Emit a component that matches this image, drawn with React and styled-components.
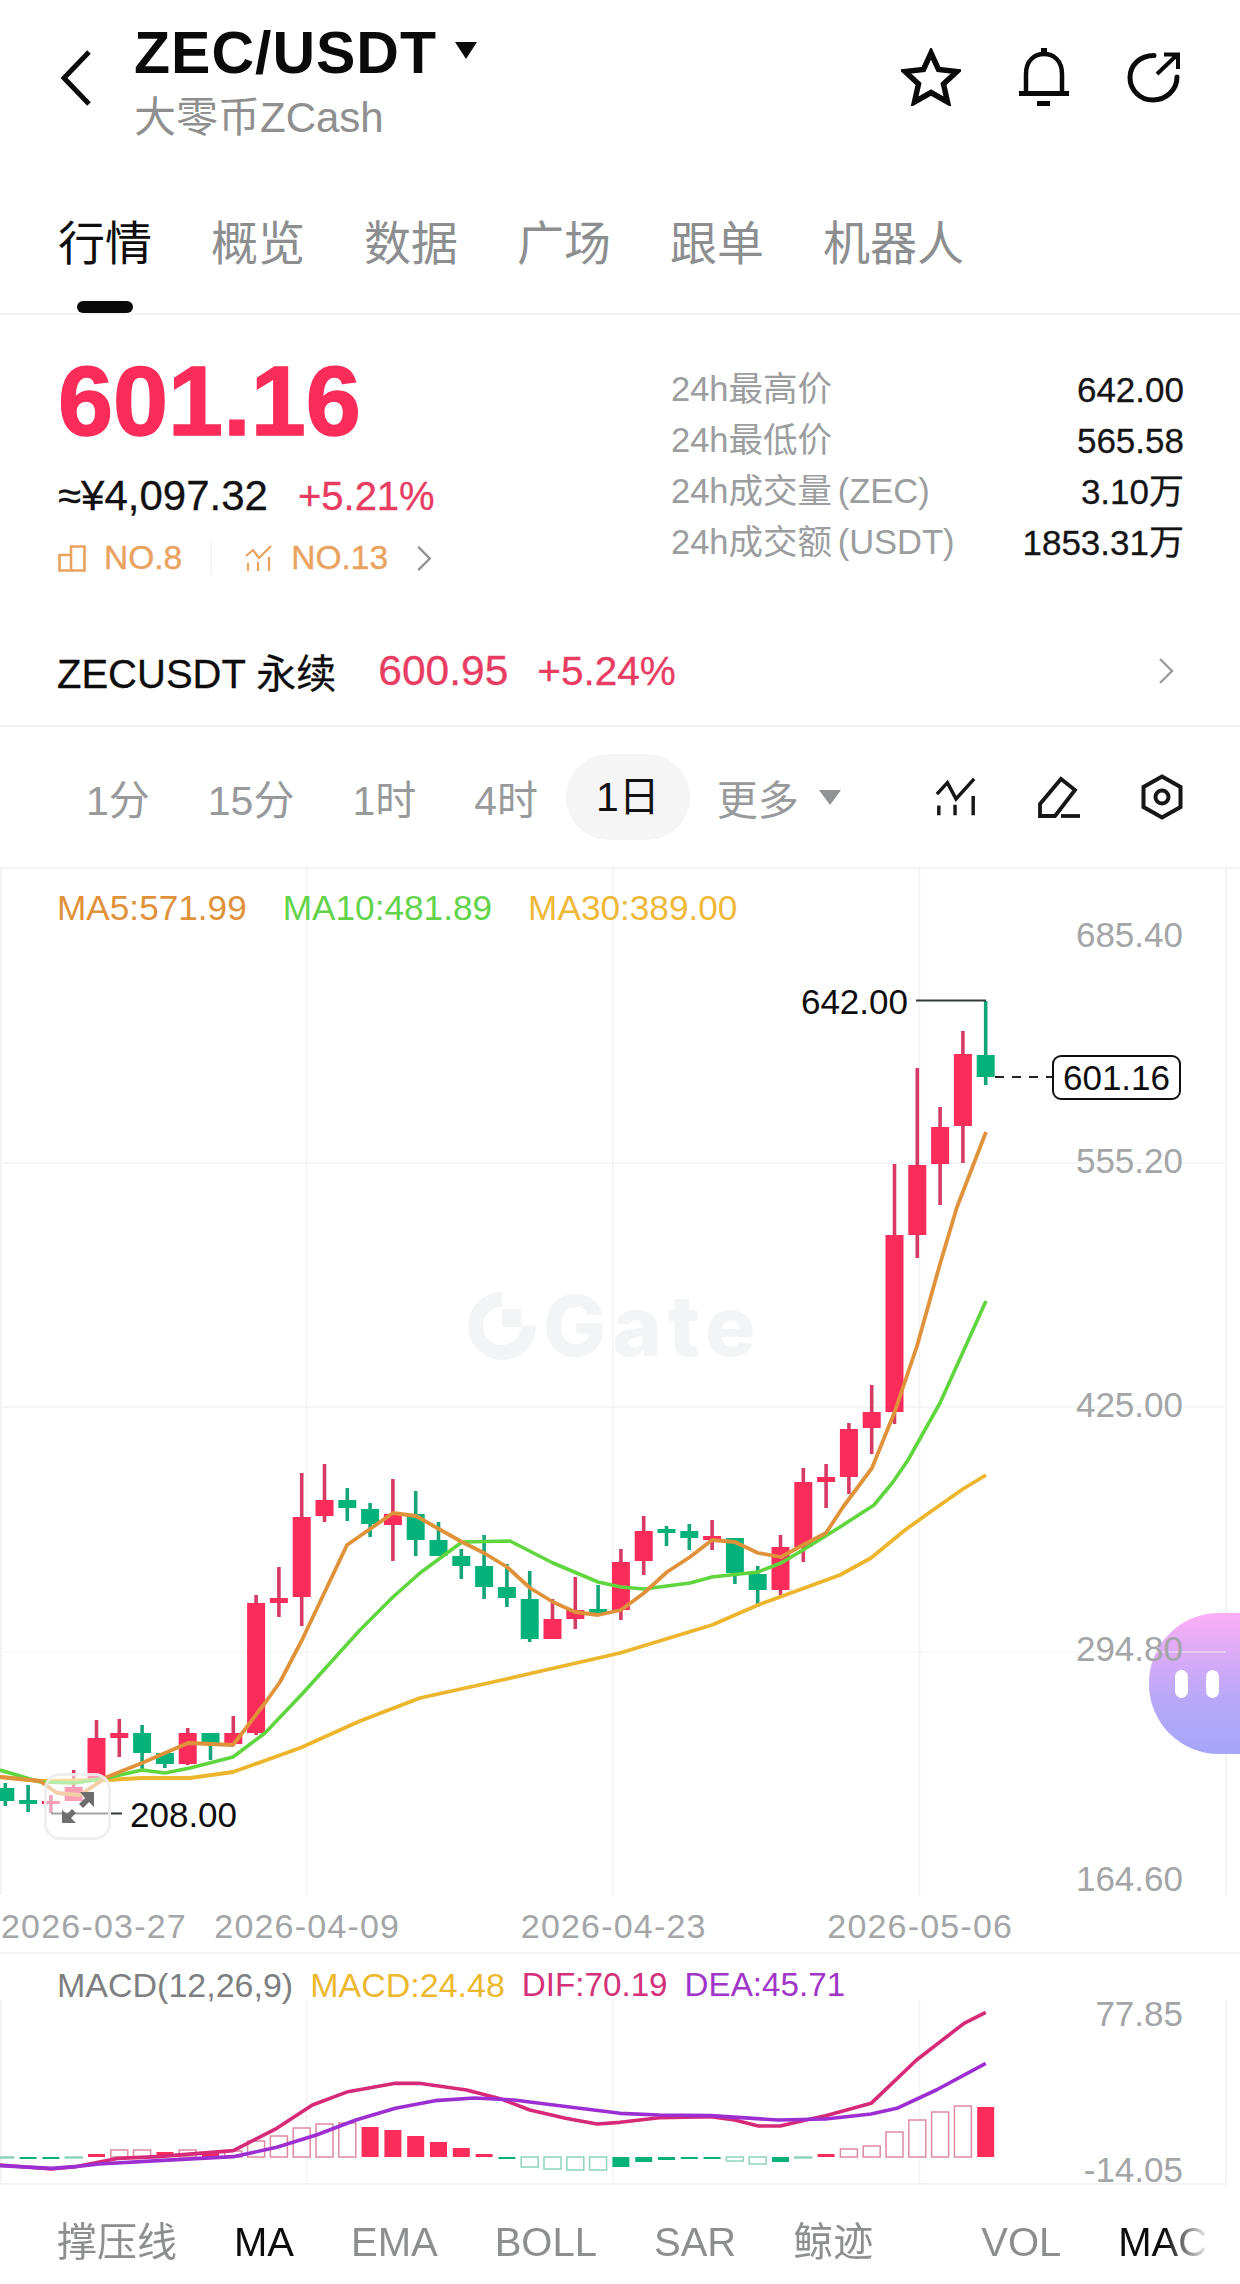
import React from 'react';
import styled, { createGlobalStyle } from 'styled-components';

const GlobalStyle = createGlobalStyle`
    html, body {
        margin: 0;
        padding: 0;
        background: #fff;
    }
    body {
        font-family: "Liberation Sans", "Noto Sans CJK SC", sans-serif;
    }
`;

const RED = '#fb2c59';
const RED_WICK = '#d63a65';
const GREEN = '#05b37a';
const GREEN_WICK = '#14a47a';
const GRID = '#f2f3f4';
const AXIS = '#a3a5a7';

const Page = styled.div`
    position: relative;
    width: 1240px;
    height: 2284px;
    overflow: hidden;
    background: #fff;
    color: #111;
`;

const Header = styled.header`
    display: flex;
    align-items: flex-start;
    height: 140px;
    box-sizing: border-box;
    padding: 22px 59px 0 60px;
`;

const BackIcon = styled.svg`
    width: 32px;
    height: 56px;
    margin-top: 28px;
`;

const TitleBlock = styled.div`
    margin-left: 42px;
    display: flex;
    flex-direction: column;
`;

const Title = styled.h1`
    display: flex;
    align-items: flex-start;
    margin: 0;
    font-size: 59px;
    line-height: 62px;
    font-weight: 700;
    color: #0a0a0a;
    letter-spacing: 1px;
`;

const Caret = styled.span`
    margin: 20px 0 0 18px;
    width: 0;
    height: 0;
    border-left: 11px solid transparent;
    border-right: 11px solid transparent;
    border-top: 17px solid #0a0a0a;
`;

const Subtitle = styled.div`
    margin-top: 9px;
    font-size: 42px;
    line-height: 50px;
    color: #8f8f8f;
`;

const HeaderIcons = styled.div`
    display: flex;
    align-items: center;
    gap: 58px;
    margin-left: auto;
    margin-top: 26px;
`;

const Tabs = styled.nav`
    display: flex;
    gap: 59px;
    height: 175px;
    box-sizing: border-box;
    padding: 74px 0 0 58px;
    border-bottom: 2px solid #f3f3f3;
`;

const Tab = styled.div`
    position: relative;
    height: 60px;
    font-size: 47px;
    line-height: 60px;
    color: ${(p) => (p.$active ? '#0d0d0d' : '#8c8e90')};

    ${(p) => p.$active && `
        &::after {
            content: '';
            position: absolute;
            left: 19px;
            top: 87px;
            width: 56px;
            height: 12px;
            border-radius: 6px;
            background: #0a0a0a;
        }
    `}
`;

const Stats = styled.section`
    display: flex;
    justify-content: space-between;
    height: 305px;
    box-sizing: border-box;
    padding: 36px 56px 0 58px;
`;

const PriceColumn = styled.div`
    display: flex;
    flex-direction: column;
`;

const BigPrice = styled.div`
    font-size: 99px;
    line-height: 100px;
    font-weight: 700;
    color: ${RED};
    -webkit-text-stroke: 1.5px ${RED};
`;

const FiatRow = styled.div`
    display: flex;
    gap: 30px;
    margin-top: 20px;
    line-height: 50px;
    font-size: 42px;
    -webkit-text-stroke: 0.3px currentColor;
`;

const Change = styled.span`
    font-size: 40px;
    color: #e83c63;
`;

const RankRow = styled.div`
    display: flex;
    align-items: center;
    margin-top: 17px;
    height: 40px;
    font-size: 33.5px;
    color: #e9a35f;
    -webkit-text-stroke: 0.4px currentColor;
`;

const RankItem = styled.div`
    display: flex;
    align-items: center;
    gap: 18px;
`;

const RankDivider = styled.span`
    width: 2px;
    height: 34px;
    margin: 0 33px 0 28px;
    background: #f5f5f5;
`;

const RankChevron = styled.svg`
    width: 16px;
    height: 27px;
    margin-left: 28px;
`;

const StatTable = styled.div`
    display: flex;
    flex-direction: column;
    width: 513px;
    padding-top: 13px;
`;

const StatRow = styled.div`
    display: flex;
    justify-content: space-between;
    height: 51px;
    line-height: 51px;
    font-size: 34.5px;
`;

const StatLabel = styled.span`
    color: #9b9d9f;
    word-spacing: -4px;
`;

const StatValue = styled.span`
    font-size: 35px;
    color: #141414;
    -webkit-text-stroke: 0.3px currentColor;
`;

const PerpRow = styled.section`
    display: flex;
    align-items: center;
    height: 107px;
    box-sizing: border-box;
    padding: 0 65px 3px 57px;
    border-bottom: 2px solid #f3f3f3;
    font-size: 40px;
`;

const PerpName = styled.span`
    color: #0d0d0d;
    -webkit-text-stroke: 0.3px currentColor;
`;

const PerpPrice = styled.span`
    margin-left: 42px;
    font-size: 42.5px;
    color: #e83c63;
    -webkit-text-stroke: 0.3px currentColor;
`;

const PerpChange = styled.span`
    margin-left: 29px;
    font-size: 40.5px;
    color: #e83c63;
    -webkit-text-stroke: 0.3px currentColor;
`;

const PerpChevron = styled.svg`
    width: 18px;
    height: 28px;
    margin-left: auto;
`;

const IntervalBar = styled.section`
    display: flex;
    align-items: center;
    height: 142px;
    box-sizing: border-box;
    padding: 0 57px 0 86px;
    border-bottom: 2px solid #f3f3f3;
    font-size: 41px;
`;

const Interval = styled.div`
    color: ${(p) => (p.$active ? '#111' : '#97999b')};
    margin-right: 58px;
    ${(p) => p.$active && `
        height: 86px;
        line-height: 86px;
        padding: 0 30px;
        margin: 0 27px 0 -30px;
        border-radius: 43px;
        background: #f5f5f5;
    `}
`;

const MoreLabel = styled.div`
    color: #97999b;
`;

const MoreCaret = styled.span`
    margin-left: 20px;
    width: 0;
    height: 0;
    border-left: 11px solid transparent;
    border-right: 11px solid transparent;
    border-top: 15px solid #909294;
`;

const ToolIcons = styled.div`
    display: flex;
    align-items: center;
    gap: 60px;
    margin-left: auto;
`;

const ChartPanel = styled.section`
    position: relative;
    z-index: 1;
    height: 1026px;
`;

const ChartSvg = styled.svg`
    display: block;
    width: 1240px;
    overflow: visible;

    text {
        font-family: "Liberation Sans", sans-serif;
        font-size: 35px;
    }

    .watermark {
        font-family: Inter, "Liberation Sans", sans-serif;
        font-size: 84px;
        font-weight: 800;
        letter-spacing: 6px;
    }
`;

const Legend = styled.div`
    display: flex;
    gap: 36px;
    font-size: 35.2px;
    line-height: 30px;
`;

const ChartLegend = styled(Legend)`
    position: absolute;
    left: 57px;
    top: 24px;
`;

const LegendItem = styled.span`
    color: ${(p) => p.$color};
    font-size: ${(p) => p.$size || 'inherit'};
`;

const ExpandButton = styled.div`
    position: absolute;
    left: 44px;
    top: 904px;
    width: 67px;
    height: 67px;
    box-sizing: border-box;
    display: flex;
    align-items: center;
    justify-content: center;
    border: 3px solid rgba(236, 236, 236, 0.85);
    border-radius: 16px;
    background: rgba(255, 255, 255, 0.55);
`;

const DateRow = styled.div`
    display: grid;
    grid-template-columns: 153px repeat(3, 306.5px);
    align-items: center;
    height: 59px;
    box-sizing: border-box;
    padding: 6px 0 0 1px;
    border-bottom: 2px solid #f3f3f3;
    font-size: 34px;
    letter-spacing: 1.2px;
    color: ${AXIS};
`;

const DateLabel = styled.span`
    white-space: nowrap;
    justify-self: ${(p) => (p.$first ? 'start' : 'center')};
`;

const MacdPanel = styled.section`
    position: relative;
    z-index: 1;
    height: 231px;
`;

const MacdLegend = styled(Legend)`
    gap: 17px;
    height: 46px;
    box-sizing: border-box;
    padding: 16px 0 0 57px;
    font-size: 34px;
`;

const BottomBar = styled.nav`
    display: flex;
    gap: 57px;
    width: 1210px;
    height: 99px;
    box-sizing: border-box;
    padding: 27px 0 0 57px;
    overflow: hidden;
    font-size: 40px;
    line-height: 60px;
    white-space: nowrap;
    mask-image: linear-gradient(to right, #000 1165px, transparent 1210px);
`;

const BottomItem = styled.span`
    color: ${(p) => (p.$active ? '#0d0d0d' : '#8c8e90')};
`;

const BottomDivider = styled.span`
    width: 2px;
    height: 44px;
    margin: 8px 0 0 -6px;
    background: #f3f3f3;
`;

const Assistant = styled.div`
    position: absolute;
    z-index: 0;
    right: 0;
    top: 1613px;
    width: 91px;
    height: 141px;
    display: flex;
    justify-content: flex-start;
    align-items: center;
    gap: 18px;
    box-sizing: border-box;
    padding: 0 0 0 26px;
    border-radius: 70px 0 0 70px;
    background: linear-gradient(180deg, #fcaef6 0%, #b9a8f8 60%, #a6a6fb 100%);
`;

const AssistantEye = styled.span`
    width: 13px;
    height: 28px;
    border-radius: 7px;
    background: #fff;
`;

// k counts from the newest candle: [k, up, wickTop, bodyTop, bodyBottom, wickBottom]
const candles = [
    [0, false, 1001, 1055, 1077, 1085],
    [1, true, 1031, 1054, 1126, 1163],
    [2, true, 1107, 1127, 1164, 1205],
    [3, true, 1068, 1165, 1235, 1258],
    [4, true, 1164, 1235, 1412, 1424],
    [5, true, 1385, 1412, 1428, 1454],
    [6, true, 1423, 1429, 1477, 1494],
    [7, true, 1464, 1477, 1482, 1508],
    [8, true, 1468, 1482, 1547, 1562],
    [9, true, 1535, 1547, 1590, 1595],
    [10, false, 1566, 1574, 1590, 1607],
    [11, false, 1538, 1538, 1573, 1584],
    [12, true, 1520, 1536, 1540, 1550],
    [13, false, 1524, 1531, 1538, 1550],
    [14, false, 1526, 1529, 1533, 1546],
    [15, true, 1516, 1531, 1561, 1575],
    [16, true, 1549, 1562, 1610, 1620],
    [17, false, 1585, 1609, 1613, 1616],
    [18, true, 1577, 1610, 1619, 1629],
    [19, true, 1599, 1619, 1639, 1639],
    [20, false, 1571, 1599, 1639, 1642],
    [21, false, 1564, 1587, 1598, 1607],
    [22, false, 1535, 1566, 1587, 1599],
    [23, false, 1549, 1556, 1566, 1579],
    [24, false, 1522, 1540, 1556, 1556],
    [25, false, 1491, 1514, 1540, 1556],
    [26, true, 1479, 1514, 1525, 1561],
    [27, false, 1503, 1509, 1524, 1537],
    [28, false, 1488, 1500, 1508, 1521],
    [29, true, 1464, 1500, 1516, 1522],
    [30, true, 1473, 1517, 1597, 1626],
    [31, true, 1567, 1598, 1603, 1617],
    [32, true, 1595, 1603, 1733, 1735],
    [33, true, 1716, 1733, 1744, 1744],
    [34, false, 1733, 1733, 1744, 1760],
    [35, true, 1728, 1733, 1764, 1765],
    [36, false, 1753, 1753, 1764, 1768],
    [37, false, 1725, 1733, 1753, 1770],
    [38, true, 1719, 1733, 1738, 1757],
    [39, true, 1720, 1738, 1782, 1782],
    [40, true, 1770, 1787, 1801, 1801],
    [41, true, 1795, 1801, 1804, 1813],
    [42, false, 1785, 1800, 1804, 1812],
    [43, false, 1783, 1788, 1801, 1806],
];

const candleX = (k) => 985.7 - k * 22.8;

const ma5 = '0,1777 40,1781 57,1793 80,1795 107,1777 142,1763 188,1743 233,1745 265,1703 280,1682 302,1640 347,1545 393,1513 416,1516 439,1529 462,1542 484,1553 507,1567 530,1588 553,1602 575,1612 598,1615 621,1610 644,1593 667,1572 690,1557 712,1540 735,1542 758,1553 781,1557 803,1545 826,1533 843,1507 872,1468 895,1411 917,1346 940,1264 957,1207 986,1132';
const ma10 = '0,1770 40,1782 75,1783 107,1778 142,1770 165,1773 190,1768 233,1757 265,1733 303,1693 360,1630 393,1597 420,1573 462,1542 510,1541 553,1563 598,1582 621,1587 644,1589 690,1583 712,1577 758,1572 781,1563 803,1550 840,1527 874,1505 893,1482 908,1460 940,1403 963,1352 986,1301';
const ma30 = '0,1777 40,1781 107,1780 142,1778 190,1778 233,1772 300,1748 360,1721 420,1698 502,1680 620,1653 712,1625 758,1605 840,1575 871,1558 905,1530 933,1510 963,1489 986,1475';

// macd bars: [k, bar end y, filled]
const macdBars = [
    [0, 2107, true], [1, 2106, false], [2, 2112, false], [3, 2120, false], [4, 2132, false],
    [5, 2146, false], [6, 2149, false], [7, 2154, true], [8, 2158, false], [9, 2162, true],
    [10, 2164, false], [11, 2161, false], [12, 2158, true], [13, 2158, true], [14, 2160, true],
    [15, 2162, true], [16, 2167, true], [17, 2170, false], [18, 2170, false], [19, 2169, false],
    [20, 2167, false], [21, 2159, true], [22, 2154, true], [23, 2148, true], [24, 2142, true],
    [25, 2136, true], [26, 2130, true], [27, 2127, true], [28, 2123, false], [29, 2124, false],
    [30, 2128, false], [31, 2136, false], [32, 2141, false], [33, 2151, false], [34, 2152, true],
    [35, 2150, false], [36, 2152, true], [37, 2150, false], [38, 2150, false], [39, 2154, true],
    [40, 2158, false], [41, 2159, true], [42, 2158, true], [43, 2158, false],
];

const MACD_ZERO = 2157;

const toPoints = (pts, ox, sx) => pts.map(([x, y]) => `${ox + x / sx},${1940 + y / 3}`).join(' ');

const dif = [
    toPoints([[0, 675], [130, 687], [190, 680], [300, 655], [400, 650], [590, 632], [700, 565], [790, 495], [880, 455], [1000, 430], [1060, 430], [1180, 450], [1270, 478], [1340, 510], [1430, 535], [1510, 552], [1568, 547]], 0, 2.529),
    toPoints([[100, 533], [230, 530], [290, 540], [350, 558], [405, 558], [470, 540], [520, 527], [635, 490], [750, 360], [870, 250], [925, 217]], 620, 2.529),
].join(' ');

const dea = [
    toPoints([[0, 677], [130, 685], [190, 680], [250, 672], [400, 662], [590, 650], [700, 622], [800, 585], [900, 540], [1000, 505], [1100, 482], [1200, 474], [1300, 480], [1400, 495], [1568, 520]], 0, 2.529),
    toPoints([[100, 525], [230, 527], [400, 540], [520, 537], [635, 522], [700, 505], [800, 450], [925, 370]], 620, 2.529),
].join(' ');

const gridX = [306.5, 613, 919.5];

function StarIcon() {
    return (
        <svg width="60" height="58" viewBox="0 0 60 58">
            <polygon
                points="30,5 37.5,21.5 56,23.5 42.5,36 46.5,54 30,44.5 13.5,54 17.5,36 4,23.5 22.5,21.5"
                fill="none"
                stroke="#0a0a0a"
                strokeWidth="5.5"
                strokeLinejoin="miter"
            />
        </svg>
    );
}

function BellIcon() {
    return (
        <svg width="50" height="58" viewBox="0 0 50 58">
            <path d="M7 45V26C7 12 16 6 25 6s18 6 18 20v19" fill="none" stroke="#0a0a0a" strokeWidth="4.5" />
            <rect x="0" y="43" width="50" height="5" fill="#0a0a0a" />
            <rect x="22" y="0" width="6" height="7" fill="#0a0a0a" />
            <rect x="18" y="53" width="13" height="5" fill="#0a0a0a" />
        </svg>
    );
}

function ShareIcon() {
    return (
        <svg width="54" height="52" viewBox="0 0 54 52">
            <path d="M27 4.5C13 4.5 3 14 3 26.5S13 49 26 49s24-10 24-23" fill="none" stroke="#0a0a0a" strokeWidth="5" strokeLinecap="round" />
            <path d="M30 23L50 4M37 3.5h14V18" fill="none" stroke="#0a0a0a" strokeWidth="4" />
        </svg>
    );
}

function IndicatorIcon() {
    return (
        <svg width="42" height="40" viewBox="0 0 44 40">
            <path d="M2 17L13 5l9 17L41 1" fill="none" stroke="#161616" strokeWidth="3.6" />
            <path d="M4 29v10M21 28v11M40 19v20" stroke="#161616" strokeWidth="3.6" />
        </svg>
    );
}

function PenIcon() {
    return (
        <svg width="44" height="44" viewBox="0 0 44 44">
            <path d="M3 41V29L24 4l14 11-20 26z" fill="none" stroke="#161616" strokeWidth="3.8" />
            <path d="M24 41h19" stroke="#161616" strokeWidth="3.8" />
        </svg>
    );
}

function HexIcon() {
    return (
        <svg width="42" height="46" viewBox="0 0 42 46">
            <polygon points="21,2.5 39.5,13 39.5,33 21,43.5 2.5,33 2.5,13" fill="none" stroke="#161616" strokeWidth="4" />
            <circle cx="21" cy="23" r="6.5" fill="none" stroke="#161616" strokeWidth="4" />
        </svg>
    );
}

function RankBoxIcon() {
    return (
        <svg width="28" height="27" viewBox="0 0 28 27">
            <path d="M13 10H1.5v15.5H13zM13 1.5h13.5v24H13z" fill="none" stroke="#e9a35f" strokeWidth="2.6" />
        </svg>
    );
}

function RankChartIcon() {
    return (
        <svg width="28" height="27" viewBox="0 0 28 27">
            <path d="M1 11l7-6 6 8L26 1" fill="none" stroke="#e9a35f" strokeWidth="2.2" />
            <path d="M3 18v8M13 17v9M24 12v14" stroke="#e9a35f" strokeWidth="2.2" />
        </svg>
    );
}

function ChevronPath({ color }) {
    return <path d="M2 2l12 12L2 26" fill="none" stroke={color} strokeWidth="2.4" />;
}

function Candle({ k, up, wickTop, bodyTop, bodyBottom, wickBottom }) {
    const x = candleX(k);
    return (
        <g>
            <line x1={x} x2={x} y1={wickTop} y2={wickBottom} stroke={up ? RED_WICK : GREEN_WICK} strokeWidth="3.6" />
            <rect x={x - 9} y={bodyTop} width="18" height={bodyBottom - bodyTop} fill={up ? RED : GREEN} />
        </g>
    );
}

function MacdBar({ k, value, filled }) {
    const x = candleX(k) - 8.5;
    const top = Math.min(value, MACD_ZERO);
    const height = Math.abs(value - MACD_ZERO);
    const up = value < MACD_ZERO;
    if (filled) {
        return <rect x={x} y={top} width="17" height={Math.max(height, 2)} fill={up ? RED : GREEN} />;
    }
    return (
        <rect
            x={x}
            y={top}
            width="17"
            height={height}
            fill="#fff"
            fillOpacity="0.6"
            stroke={up ? '#dd8ba1' : '#8fd4bc'}
            strokeWidth="1.5"
        />
    );
}

function MainChart() {
    return (
        <ChartSvg viewBox="0 869 1240 1026" height="1026">
            <line x1="1" x2="1" y1="869" y2="1895" stroke={GRID} strokeWidth="2" />
            <path d="M1226 869V1613M1226 1754V1895" stroke={GRID} strokeWidth="2" fill="none" />
            {gridX.map((x) => (
                <line key={x} x1={x} x2={x} y1="869" y2="1895" stroke={GRID} strokeWidth="1.5" />
            ))}
            {[1163, 1407].map((y) => (
                <line key={y} x1="0" x2="1226" y1={y} y2={y} stroke={GRID} strokeWidth="1.5" />
            ))}
            <line x1="0" x2="1226" y1="1652" y2="1652" stroke={GRID} strokeWidth="1.5" strokeOpacity="0.6" />

            <path d="M502 1299.5A26.5 26.5 0 1 0 528.5 1326" fill="none" stroke="#f3f4f5" strokeWidth="15" />
            <rect x="502" y="1309" width="19" height="18" fill="#f3f4f5" />
            <text className="watermark" x="543" y="1356" fill="#f3f4f5">Gate</text>

            {candles.map(([k, up, wickTop, bodyTop, bodyBottom, wickBottom]) => (
                <Candle key={k} k={k} up={up} wickTop={wickTop} bodyTop={bodyTop} bodyBottom={bodyBottom} wickBottom={wickBottom} />
            ))}

            <polyline points={ma30} fill="none" stroke="#ecb52c" strokeWidth="3.8" strokeLinejoin="round" />
            <polyline points={ma10} fill="none" stroke="#5fd53e" strokeWidth="3.6" strokeLinejoin="round" />
            <polyline points={ma5} fill="none" stroke="#e0923a" strokeWidth="3.8" strokeLinejoin="round" />

            <path d="M916 1000.5H986" stroke="#33393a" strokeWidth="2" fill="none" />
            <text x="908" y="1014" textAnchor="end" fill="#0d0d0d">642.00</text>

            <path d="M51 1813.5H122" stroke="#33393a" strokeWidth="2" fill="none" />
            <text x="130" y="1827" fill="#0d0d0d">208.00</text>

            <line x1="995" x2="1053" y1="1077" y2="1077" stroke="#222" strokeWidth="2" strokeDasharray="9 8" />
            <rect x="1053" y="1056" width="127" height="43" rx="8" fill="#fff" stroke="#111" strokeWidth="2" />
            <text x="1116.5" y="1090" textAnchor="middle" fill="#0d0d0d">601.16</text>

            <text x="1183" y="947" textAnchor="end" fill={AXIS}>685.40</text>
            <text x="1183" y="1173" textAnchor="end" fill={AXIS}>555.20</text>
            <text x="1183" y="1417" textAnchor="end" fill={AXIS}>425.00</text>
            <text x="1183" y="1661" textAnchor="end" fill={AXIS}>294.80</text>
            <text x="1183" y="1891" textAnchor="end" fill={AXIS}>164.60</text>
        </ChartSvg>
    );
}

function MacdChart() {
    return (
        <ChartSvg viewBox="0 2000 1240 185" height="185">
            <line x1="1226" x2="1226" y1="2000" y2="2185" stroke={GRID} strokeWidth="2" />
            <line x1="1" x2="1" y1="2000" y2="2185" stroke={GRID} strokeWidth="2" />
            {gridX.map((x) => (
                <line key={x} x1={x} x2={x} y1="2000" y2="2185" stroke={GRID} strokeWidth="1.5" />
            ))}
            <line x1="0" x2="1226" y1="2184" y2="2184" stroke={GRID} strokeWidth="2" />
            {macdBars.map(([k, value, filled]) => (
                <MacdBar key={k} k={k} value={value} filled={filled} />
            ))}
            <polyline points={dif} fill="none" stroke="#d62a78" strokeWidth="3.6" strokeLinejoin="round" />
            <polyline points={dea} fill="none" stroke="#9d2fd2" strokeWidth="3.6" strokeLinejoin="round" />
            <text x="1183" y="2026" textAnchor="end" fill={AXIS}>77.85</text>
            <text x="1183" y="2182" textAnchor="end" fill={AXIS}>-14.05</text>
        </ChartSvg>
    );
}

const stats = [
    ['24h最高价', '642.00'],
    ['24h最低价', '565.58'],
    ['24h成交量 (ZEC)', '3.10万'],
    ['24h成交额 (USDT)', '1853.31万'],
];

const tabs = ['行情', '概览', '数据', '广场', '跟单', '机器人'];
const intervals = ['1分', '15分', '1时', '4时', '1日'];

function App() {
    return (
        <Page>
            <GlobalStyle />
            <Header>
                <BackIcon viewBox="0 0 32 56">
                    <path d="M29 2L4 28l25 26" fill="none" stroke="#0a0a0a" strokeWidth="5" />
                </BackIcon>
                <TitleBlock>
                    <Title>ZEC/USDT<Caret /></Title>
                    <Subtitle>大零币ZCash</Subtitle>
                </TitleBlock>
                <HeaderIcons>
                    <StarIcon />
                    <BellIcon />
                    <ShareIcon />
                </HeaderIcons>
            </Header>

            <Tabs>
                {tabs.map((t, i) => (
                    <Tab key={t} $active={i === 0}>{t}</Tab>
                ))}
            </Tabs>

            <Stats>
                <PriceColumn>
                    <BigPrice>601.16</BigPrice>
                    <FiatRow>
                        <span>≈¥4,097.32</span>
                        <Change>+5.21%</Change>
                    </FiatRow>
                    <RankRow>
                        <RankItem><RankBoxIcon />NO.8</RankItem>
                        <RankDivider />
                        <RankItem><RankChartIcon />NO.13</RankItem>
                        <RankChevron viewBox="0 0 16 28"><ChevronPath color="#8f9193" /></RankChevron>
                    </RankRow>
                </PriceColumn>
                <StatTable>
                    {stats.map(([label, value]) => (
                        <StatRow key={label}>
                            <StatLabel>{label}</StatLabel>
                            <StatValue>{value}</StatValue>
                        </StatRow>
                    ))}
                </StatTable>
            </Stats>

            <PerpRow>
                <PerpName>ZECUSDT 永续</PerpName>
                <PerpPrice>600.95</PerpPrice>
                <PerpChange>+5.24%</PerpChange>
                <PerpChevron viewBox="0 0 16 28"><ChevronPath color="#9a9c9e" /></PerpChevron>
            </PerpRow>

            <IntervalBar>
                {intervals.map((t) => (
                    <Interval key={t} $active={t === '1日'}>{t}</Interval>
                ))}
                <MoreLabel>更多</MoreLabel>
                <MoreCaret />
                <ToolIcons>
                    <IndicatorIcon />
                    <PenIcon />
                    <HexIcon />
                </ToolIcons>
            </IntervalBar>

            <ChartPanel>
                <MainChart />
                <ChartLegend>
                    <LegendItem $color="#e0923a">MA5:571.99</LegendItem>
                    <LegendItem $color="#62d34a">MA10:481.89</LegendItem>
                    <LegendItem $color="#eeb838">MA30:389.00</LegendItem>
                </ChartLegend>
                <ExpandButton>
                    <svg width="48" height="48" viewBox="0 0 48 48">
                        <path d="M40 9v15l-5-5-6 6-4-4 6-6-5-6z" fill="#6e6e6e" />
                        <path d="M8 40V27l5 4 5-5 4 4-5 5 5 5z" fill="#6e6e6e" />
                    </svg>
                </ExpandButton>
            </ChartPanel>

            <DateRow>
                <DateLabel $first>2026-03-27</DateLabel>
                <DateLabel>2026-04-09</DateLabel>
                <DateLabel>2026-04-23</DateLabel>
                <DateLabel>2026-05-06</DateLabel>
            </DateRow>

            <MacdPanel>
                <MacdLegend>
                    <LegendItem $color="#7d7f81">MACD(12,26,9)</LegendItem>
                    <LegendItem $color="#ebb82e">MACD:24.48</LegendItem>
                    <LegendItem $color="#d3307a" $size="33.2px">DIF:70.19</LegendItem>
                    <LegendItem $color="#a035c8" $size="33.2px">DEA:45.71</LegendItem>
                </MacdLegend>
                <MacdChart />
            </MacdPanel>

            <BottomBar>
                <BottomItem>撑压线</BottomItem>
                <BottomItem $active>MA</BottomItem>
                <BottomItem>EMA</BottomItem>
                <BottomItem>BOLL</BottomItem>
                <BottomItem>SAR</BottomItem>
                <BottomItem>鲸迹</BottomItem>
                <BottomDivider />
                <BottomItem>VOL</BottomItem>
                <BottomItem $active>MACD</BottomItem>
            </BottomBar>

            <Assistant>
                <AssistantEye />
                <AssistantEye />
            </Assistant>
        </Page>
    );
}

export default App;
